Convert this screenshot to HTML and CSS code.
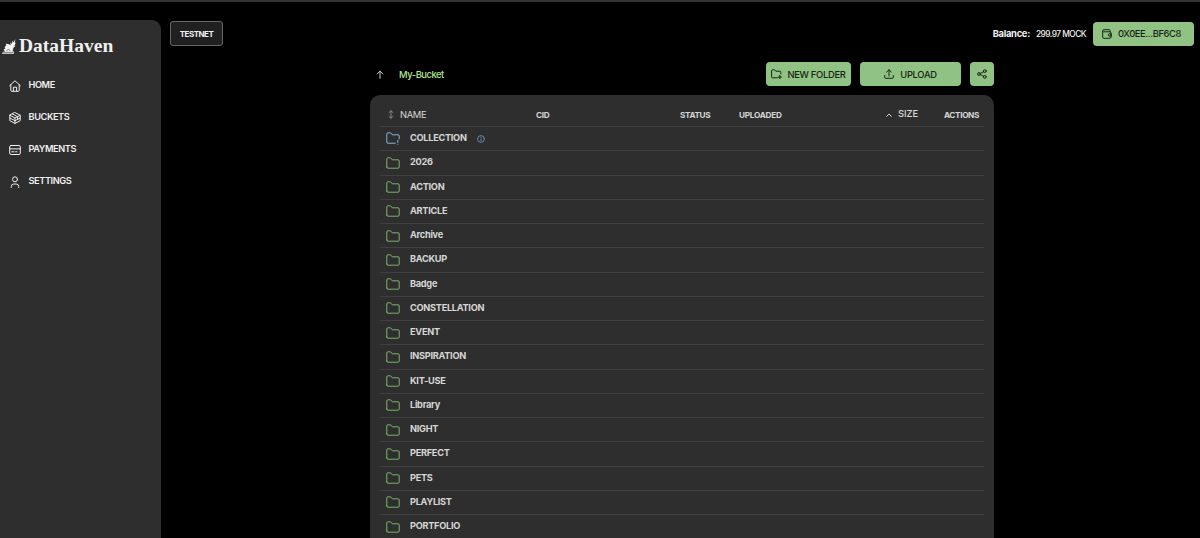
FILE: index.html
```
<!DOCTYPE html>
<html lang="en">
<head>
  <meta charset="UTF-8">
  <title>DataHaven</title>
  <link rel="stylesheet" href="styles.css">
</head>
<body>
  <!-- shared icons -->
  <svg class="sprite">
    <symbol id="folder" viewBox="0 0 14 12">
      <path d="M.8 10V2Q.8.8 2 .8H4.6L6.2 2.8H12Q13.2 2.8 13.2 4V10Q13.2 11.2 12 11.2H2Q.8 11.2.8 10Z"/>
    </symbol>
  </svg>

  <aside class="sidebar">
    <div class="logo">
      <svg class="logo-mark" viewBox="0 0 14 15">
        <path d="M0 14.8 1 12.8 3 12.4 1.6 10.6 3.4 9.6 2.6 8.2 4.4 6 3.8 4.4 5.4 5 7.6 5.6 8.6 6.6 8.4 3.4 9.8 5 10.6 1.6 11.4 3.6 13.4.2 12.8 3.8 13.8 4 12.4 6.4 13.4 7 11.4 8.8 10.6 12.2 12 12.8V14.8Z"/>
        <path class="cut" d="M4.6 11.6 6.6 10.2 8 11.8M1.6 13.4H11"/>
      </svg>
      <span class="logo-text">DataHaven</span>
    </div>
    <nav class="menu">
      <a class="menu-item">
        <svg viewBox="0 0 12 12"><path d="M.7 5.6 6 .8 11.3 5.6M1.8 4.8V10.4Q1.8 11.3 2.7 11.3H9.3Q10.2 11.3 10.2 10.4V4.8M4.4 11.2V7.2H7.6V11.2"/></svg>
        <span>HOME</span>
      </a>
      <a class="menu-item">
        <svg viewBox="0 0 12 12"><path d="M6 .6 11.2 3.3V8.7L6 11.4.8 8.7V3.3ZM.8 3.3 6 6 11.2 3.3M6 6V11.4M3.4 2 8.6 4.7V7M.8 6 6 8.7 11.2 6"/></svg>
        <span>BUCKETS</span>
      </a>
      <a class="menu-item">
        <svg viewBox="0 0 12 12"><rect x=".7" y="1.5" width="10.6" height="9" rx="1.4"/><path d="M.7 4.9H11.3M2.8 7.8H5M6.6 7.8H8"/></svg>
        <span>PAYMENTS</span>
      </a>
      <a class="menu-item">
        <svg viewBox="0 0 12 12"><circle cx="6" cy="3.3" r="2.5"/><path d="M2.3 11.5V10.5Q2.3 8 4.8 8H7.2Q9.7 8 9.7 10.5V11.5"/></svg>
        <span>SETTINGS</span>
      </a>
    </nav>
  </aside>

  <div class="page">
    <header class="topbar">
      <div class="network">TESTNET</div>
      <div class="account">
        <span class="balance-label">Balance:</span>
        <span class="balance">299.97 MOCK</span>
        <button class="btn btn-wallet">
          <svg viewBox="0 0 10 10"><path d="M8 2.8V1.6Q8 .7 7.1.7H1.9Q.7.7.7 1.8V8Q.7 9.3 2 9.3H7.8Q8.9 9.3 8.9 8.2V3.9Q8.9 2.8 7.8 2.8H1.6M9.4 4.9H7.2Q6.2 4.9 6.2 6T7.2 7.1H9.4Z"/></svg>
          <span>0X0EE...BF6C8</span>
        </button>
      </div>
    </header>

    <main class="content">
      <div class="toolbar">
        <svg class="up" viewBox="0 0 8 9"><path d="M4 8.4V1.1M1.1 4 4 1.1 6.9 4"/></svg>
        <span class="bucket">My-Bucket</span>
        <button class="btn btn-folder">
          <svg viewBox="0 0 11 10"><path d="M6.3 8.8H1.6Q.6 8.8.6 7.8V1.8Q.6.8 1.6.8H3.6L4.8 2.2H8.8Q9.8 2.2 9.8 3.2V5M8.8 6.4V9.8M7.1 8.1H10.5"/></svg>
          <span>NEW FOLDER</span>
        </button>
        <button class="btn btn-upload">
          <svg viewBox="0 0 10 10"><path d="M5 7V.8M2.6 3.1 5 .8 7.4 3.1M.7 6.5V8.3Q.7 9.3 1.7 9.3H8.3Q9.3 9.3 9.3 8.3V6.5"/></svg>
          <span>UPLOAD</span>
        </button>
        <button class="btn btn-share">
          <svg viewBox="0 0 10 10"><circle cx="2" cy="5" r="1.4"/><circle cx="7.8" cy="2.1" r="1.4"/><circle cx="7.8" cy="7.9" r="1.4"/><path d="M3.3 4.4 6.5 2.8M3.3 5.6 6.5 7.2"/></svg>
        </button>
      </div>

      <section class="files">
        <div class="files-head">
          <span class="col-name"><svg viewBox="0 0 6 9"><path d="M3 .8V8.2M1 2.6 3 .8 5 2.6M1 6.4 3 8.2 5 6.4"/></svg>NAME</span>
          <span class="col-cid">CID</span>
          <span class="col-status">STATUS</span>
          <span class="col-uploaded">UPLOADED</span>
          <span class="col-size"><svg viewBox="0 0 6 4"><path d="M.6 3.4 3 1 5.4 3.4"/></svg>SIZE</span>
          <span class="col-actions">ACTIONS</span>
        </div>
        <div class="row">
          <svg class="folder folder-pending" viewBox="0 0 14 13"><path d="M9.2 11.2H2Q.8 11.2.8 10V2Q.8.8 2 .8H4.6L6.2 2.8H12Q13.2 2.8 13.2 4V7M11.8 8.4V10.4M11.8 12.2V12.3"/></svg>
          <span>COLLECTION</span>
          <svg class="info" viewBox="0 0 8 8"><circle cx="4" cy="4" r="3.4"/><path d="M4 3.7V5.8M4 2.1V2.4"/></svg>
        </div>
        <div class="row"><svg class="folder"><use href="#folder"/></svg><span>2026</span></div>
        <div class="row"><svg class="folder"><use href="#folder"/></svg><span>ACTION</span></div>
        <div class="row"><svg class="folder"><use href="#folder"/></svg><span>ARTICLE</span></div>
        <div class="row"><svg class="folder"><use href="#folder"/></svg><span>Archive</span></div>
        <div class="row"><svg class="folder"><use href="#folder"/></svg><span>BACKUP</span></div>
        <div class="row"><svg class="folder"><use href="#folder"/></svg><span>Badge</span></div>
        <div class="row"><svg class="folder"><use href="#folder"/></svg><span>CONSTELLATION</span></div>
        <div class="row"><svg class="folder"><use href="#folder"/></svg><span>EVENT</span></div>
        <div class="row"><svg class="folder"><use href="#folder"/></svg><span>INSPIRATION</span></div>
        <div class="row"><svg class="folder"><use href="#folder"/></svg><span>KIT-USE</span></div>
        <div class="row"><svg class="folder"><use href="#folder"/></svg><span>Library</span></div>
        <div class="row"><svg class="folder"><use href="#folder"/></svg><span>NIGHT</span></div>
        <div class="row"><svg class="folder"><use href="#folder"/></svg><span>PERFECT</span></div>
        <div class="row"><svg class="folder"><use href="#folder"/></svg><span>PETS</span></div>
        <div class="row"><svg class="folder"><use href="#folder"/></svg><span>PLAYLIST</span></div>
        <div class="row"><svg class="folder"><use href="#folder"/></svg><span>PORTFOLIO</span></div>
      </section>
    </main>
  </div>
</body>
</html>
```

FILE: styles.css
```
* {
  box-sizing: border-box;
}
body {
  margin: 0;
  height: 538px;
  overflow: hidden;
  display: flex;
  background: #000;
  border-top: 2px solid #323337;
  font-family: Inter, "Liberation Sans", sans-serif;
  font-size: 9.2px;
  color: #f0f0f0;
}
svg {
  flex: none;
  fill: none;
  stroke: currentColor;
  stroke-width: 1;
  stroke-linecap: round;
  stroke-linejoin: round;
}
.sprite {
  display: none;
}

/* sidebar */
.sidebar {
  width: 161px;
  margin-top: 18px;
  padding-top: 17px;
  background: #2e2e2e;
  border-top-right-radius: 9px;
}
.logo {
  display: flex;
  align-items: center;
  height: 18px;
  padding-left: 2px;
  gap: 3px;
}
.logo-mark {
  width: 14px;
  height: 15px;
  fill: #f5f5f5;
  stroke: none;
}
.logo-mark .cut {
  fill: none;
  stroke: #2e2e2e;
  stroke-width: .6;
}
.logo-text {
  font-family: "Liberation Serif", serif;
  font-size: 19.5px;
  font-weight: bold;
  line-height: 18px;
}
.menu {
  padding: 13px 0 0 9px;
}
.menu-item {
  display: flex;
  align-items: center;
  height: 32px;
  gap: 7.5px;
  font-size: 9.2px;
  font-weight: 600;
  letter-spacing: -.4px;
}
.menu-item svg {
  width: 12px;
  height: 12px;
  margin-top: 3px;
}

/* top bar */
.page {
  flex: 1;
  display: flex;
  flex-direction: column;
}
.topbar {
  display: flex;
  justify-content: space-between;
  align-items: flex-start;
  padding: 19px 6px 0 9px;
}
.network {
  width: 53px;
  height: 25px;
  line-height: 24px;
  text-align: center;
  font-size: 8px;
  font-weight: 700;
  letter-spacing: -.5px;
  background: #202020;
  border: 1px solid #666;
  border-radius: 3px;
}
.account {
  display: flex;
  align-items: center;
  height: 25px;
}
.balance-label {
  font-size: 9.4px;
  font-weight: 700;
  letter-spacing: -.3px;
  margin-right: 6px;
}
.balance {
  font-size: 8.4px;
  font-weight: 500;
  letter-spacing: -.55px;
  margin-right: 7px;
}
.btn {
  display: flex;
  align-items: center;
  justify-content: center;
  height: 24px;
  padding: 0;
  border: none;
  border-radius: 4px;
  background: #90c283;
  color: #182416;
  font-family: inherit;
  font-size: 9.4px;
  font-weight: 500;
  letter-spacing: -.3px;
}
.btn svg {
  width: 10px;
  height: 10px;
}
.btn-wallet {
  width: 101px;
  justify-content: flex-start;
  padding-left: 9px;
  gap: 6px;
  letter-spacing: -.4px;
}

/* bucket toolbar */
.content {
  width: 624px;
  margin: 16px 0 0 209px;
}
.toolbar {
  display: flex;
  align-items: center;
  height: 24px;
}
.up {
  width: 8px;
  height: 9px;
  margin: 0 15px 0 6px;
  color: #c8d0c4;
}
.bucket {
  color: #b4e890;
  font-size: 9.4px;
  font-weight: 500;
  letter-spacing: -.45px;
}
.btn-folder {
  width: 85px;
  gap: 5px;
  margin-left: auto;
}
.btn-folder svg {
  width: 11px;
}
.btn-upload {
  width: 101px;
  gap: 6px;
  margin: 0 9px;
}
.btn-share {
  width: 24px;
}

/* file table */
.files {
  margin-top: 9px;
  padding: 0 10px;
  height: 460px;
  overflow: hidden;
  background: #2e2e2e;
  border-radius: 10px 10px 0 0;
  color: #d6d6d6;
}
.files-head {
  display: flex;
  align-items: center;
  height: 32px;
  padding: 8px 5px 0 8px;
  border-bottom: 1px solid #404040;
  font-size: 8.2px;
  font-weight: 700;
  letter-spacing: -.35px;
}
.col-name {
  width: 148px;
  display: flex;
  align-items: center;
  gap: 6px;
  padding-bottom: 1px;
  font-size: 9.4px;
  font-weight: 400;
}
.col-name svg {
  width: 6px;
  height: 9px;
  margin-top: 1px;
  stroke-width: .8;
  color: #999;
}
.col-cid {
  width: 144px;
}
.col-status {
  width: 59px;
}
.col-uploaded {
  width: 147px;
  letter-spacing: -.25px;
}
.col-size {
  display: flex;
  align-items: center;
  gap: 6px;
  padding-bottom: 2px;
  font-size: 9.4px;
  font-weight: 500;
  letter-spacing: 0;
}
.col-size svg {
  width: 6px;
  height: 4px;
  margin-top: 2px;
}
.col-actions {
  margin-left: auto;
}
.row {
  display: flex;
  align-items: center;
  height: 24.25px;
  padding: 0 0 2px 6px;
  gap: 10px;
  border-bottom: 1px solid #404040;
  font-size: 9.2px;
  font-weight: 700;
  letter-spacing: -.28px;
}
.folder {
  width: 14px;
  height: 12px;
  margin-top: 2px;
  color: #7cb26b;
}
.folder-pending {
  height: 13px;
  color: #86b4dc;
}
.info {
  width: 8px;
  height: 8px;
  margin-top: 3px;
  color: #6f9cc4;
  stroke-width: .8;
}
```
